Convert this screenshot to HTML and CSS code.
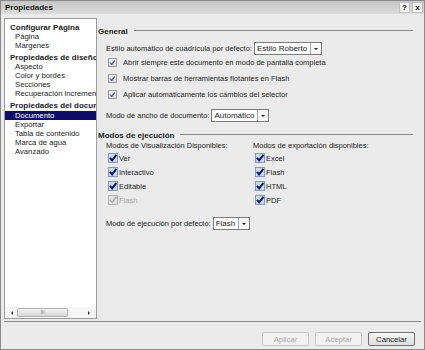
FILE: index.html
```html
<!DOCTYPE html>
<html lang="es">
<head>
    <meta charset="UTF-8">
    <meta name="viewport" content="width=device-width, initial-scale=1.0">
    <title>Propiedades</title>
    <link rel="stylesheet" href="styles.css">
</head>
<body>
    <div class="dialog">
        <div class="titlebar">
            <span class="title">Propiedades</span>
            <div class="title-btns">
                <span class="tbtn">?</span>
                <span class="tbtn">x</span>
            </div>
        </div>

        <div class="main">
            <div class="nav">
                <div class="nav-list">
                    <div class="nav-head first">Configurar Página</div>
                    <div class="nav-item">Página</div>
                    <div class="nav-item">Márgenes</div>
                    <div class="nav-head">Propiedades de diseño</div>
                    <div class="nav-item">Aspecto</div>
                    <div class="nav-item">Color y bordes</div>
                    <div class="nav-item">Secciones</div>
                    <div class="nav-item">Recuperación incremental</div>
                    <div class="nav-head">Propiedades del documento</div>
                    <div class="nav-item selected">Documento</div>
                    <div class="nav-item">Exportar</div>
                    <div class="nav-item">Tabla de contenido</div>
                    <div class="nav-item">Marca de agua</div>
                    <div class="nav-item">Avanzado</div>
                </div>
                <div class="hscroll">
                    <span class="arrow left"></span>
                    <span class="thumb">III</span>
                    <span class="arrow right"></span>
                </div>
            </div>

            <div class="content">
                <div class="legend"><span>General</span><i></i></div>

                <div class="field-row first-field">
                    Estilo automático de cuadrícula por defecto:
                    <span class="select"><span class="sel-val">Estilo Roberto</span><span class="sel-btn"></span></span>
                </div>
                <div class="cb-row">
                    <span class="chk"><svg viewBox="0 0 9 9" width="9" height="9"><path d="M2.2 4.6 L3.8 6.4 L6.8 2.6" fill="none" stroke="#3d5f9c" stroke-width="1.3"/></svg></span>
                    Abrir siempre este documento en modo de pantalla completa
                </div>
                <div class="cb-row">
                    <span class="chk"><svg viewBox="0 0 9 9" width="9" height="9"><path d="M2.2 4.6 L3.8 6.4 L6.8 2.6" fill="none" stroke="#3d5f9c" stroke-width="1.3"/></svg></span>
                    Mostrar barras de herramientas flotantes en Flash
                </div>
                <div class="cb-row">
                    <span class="chk"><svg viewBox="0 0 9 9" width="9" height="9"><path d="M2.2 4.6 L3.8 6.4 L6.8 2.6" fill="none" stroke="#3d5f9c" stroke-width="1.3"/></svg></span>
                    Aplicar automáticamente los cambios del selector
                </div>
                <div class="field-row width-field">
                    Modo de ancho de documento:
                    <span class="select"><span class="sel-val">Automático</span><span class="sel-btn"></span></span>
                </div>

                <div class="legend modes"><span>Modos de ejecución</span><i></i></div>

                <div class="columns">
                    <div class="col">
                        <div class="col-title">Modos de Visualización Disponibles:</div>
                        <div class="mode"><span class="box"><svg viewBox="0 0 10 10" width="10" height="10"><path d="M2 4.8 L4.1 7.4 L8.4 1.8" fill="none" stroke="#0d1466" stroke-width="2"/></svg></span>Ver</div>
                        <div class="mode"><span class="box"><svg viewBox="0 0 10 10" width="10" height="10"><path d="M2 4.8 L4.1 7.4 L8.4 1.8" fill="none" stroke="#0d1466" stroke-width="2"/></svg></span>Interactivo</div>
                        <div class="mode"><span class="box"><svg viewBox="0 0 10 10" width="10" height="10"><path d="M2 4.8 L4.1 7.4 L8.4 1.8" fill="none" stroke="#0d1466" stroke-width="2"/></svg></span>Editable</div>
                        <div class="mode disabled"><span class="box"><svg viewBox="0 0 10 10" width="10" height="10"><path d="M2 4.8 L4.1 7.4 L8.4 1.8" fill="none" stroke="#a8a8a8" stroke-width="1.4"/></svg></span>Flash</div>
                    </div>
                    <div class="col">
                        <div class="col-title">Modos de exportación disponibles:</div>
                        <div class="mode"><span class="box"><svg viewBox="0 0 10 10" width="10" height="10"><path d="M2 4.8 L4.1 7.4 L8.4 1.8" fill="none" stroke="#0d1466" stroke-width="2"/></svg></span>Excel</div>
                        <div class="mode"><span class="box"><svg viewBox="0 0 10 10" width="10" height="10"><path d="M2 4.8 L4.1 7.4 L8.4 1.8" fill="none" stroke="#0d1466" stroke-width="2"/></svg></span>Flash</div>
                        <div class="mode"><span class="box"><svg viewBox="0 0 10 10" width="10" height="10"><path d="M2 4.8 L4.1 7.4 L8.4 1.8" fill="none" stroke="#0d1466" stroke-width="2"/></svg></span>HTML</div>
                        <div class="mode"><span class="box"><svg viewBox="0 0 10 10" width="10" height="10"><path d="M2 4.8 L4.1 7.4 L8.4 1.8" fill="none" stroke="#0d1466" stroke-width="2"/></svg></span>PDF</div>
                    </div>
                </div>

                <div class="field-row run-field">
                    Modo de ejecución por defecto:
                    <span class="select"><span class="sel-val">Flash</span><span class="sel-btn"></span></span>
                </div>
            </div>
        </div>

        <div class="footer">
            <button class="btn" disabled>Aplicar</button>
            <button class="btn" disabled>Aceptar</button>
            <button class="btn">Cancelar</button>
        </div>
    </div>
</body>
</html>
```

FILE: styles.css
```css
body {
    margin: 0;
    font-family: "Liberation Sans", Arial, sans-serif;
    font-size: 7.5px;
    color: #1c1c1c;
    background: #ffffff;
}
.dialog {
    width: 425px;
    height: 350px;
    box-sizing: border-box;
    border: 1px solid #8a8a8a;
    background: #ebebeb;
    display: flex;
    flex-direction: column;
}
.titlebar {
    height: 13px;
    display: flex;
    align-items: center;
    justify-content: space-between;
    padding: 0 1px 0 4px;
    background: linear-gradient(#c6c6c6, #dcdcdc);
}
.title {
    font-weight: bold;
    font-size: 8px;
}
.title-btns {
    display: flex;
    gap: 2px;
}
.tbtn {
    width: 9px;
    height: 9px;
    line-height: 9px;
    text-align: center;
    font-weight: bold;
    font-size: 8px;
    background: #f2f2f2;
    border: 1px solid #c2c2c2;
}
.main {
    flex: 1;
    display: flex;
    padding: 4px 3px 2px 3px;
    min-height: 0;
}
.nav {
    width: 93px;
    box-sizing: border-box;
    border: 1px solid #9c9c9c;
    background: #fff;
    display: flex;
    flex-direction: column;
}
.nav-list {
    flex: 1;
    overflow: hidden;
    padding-top: 4px;
}
.nav-head,
.nav-item {
    white-space: nowrap;
    line-height: 9px;
}
.nav-head {
    font-weight: bold;
    font-size: 8px;
    padding-left: 5px;
    margin-top: 3px;
}
.nav-head.first {
    margin-top: 0;
}
.nav-item {
    padding-left: 10px;
    font-size: 7.7px;
}
.nav-item.selected {
    background: #0c0c6c;
    color: #fff;
    margin-top: 1px;
}
.hscroll {
    height: 11px;
    display: flex;
    align-items: center;
    background: #f6f6f6;
    padding: 0 2px;
}
.arrow {
    width: 0;
    height: 0;
    border-top: 2px solid transparent;
    border-bottom: 2px solid transparent;
}
.arrow.left {
    border-right: 2px solid #333;
    margin: 0 4px 0 4px;
}
.arrow.right {
    border-left: 2px solid #333;
    margin: 0 4px 0 auto;
}
.thumb {
    width: 51px;
    height: 9px;
    box-sizing: border-box;
    border: 1px solid #b4b4b4;
    border-radius: 2px;
    background: linear-gradient(#f4f4f4, #d6d6d6);
    font-size: 5px;
    line-height: 7px;
    text-align: center;
    color: #777;
}
.content {
    flex: 1;
    padding: 8px 8px 0 1px;
}
.legend {
    display: flex;
    align-items: center;
    height: 10px;
    font-weight: bold;
    font-size: 8px;
}
.legend i {
    flex: 1;
    height: 1px;
    background: #8c8c8c;
    margin: 0 0 2px 6px;
}
.legend.modes {
    margin-top: 8px;
}
.field-row {
    display: flex;
    align-items: center;
    gap: 2px;
    padding-left: 8px;
    height: 14px;
    white-space: nowrap;
}
.first-field {
    margin-top: 5px;
    margin-bottom: -1px;
}
.width-field {
    margin-top: 6px;
}
.run-field {
    margin-top: 9px;
}
.select {
    display: flex;
    height: 13px;
    box-sizing: border-box;
    border: 1px solid #7c7c7c;
    background: #fff;
}
.sel-val {
    padding: 0 3px 0 2px;
    line-height: 11px;
    font-size: 8px;
}
.sel-btn {
    width: 10px;
    border-left: 1px solid #a8a8a8;
    background: #f7f7f7;
    position: relative;
}
.sel-btn::after {
    content: "";
    position: absolute;
    left: 3px;
    top: 5px;
    border-left: 2px solid transparent;
    border-right: 2px solid transparent;
    border-top: 2px solid #222;
}
.cb-row {
    display: flex;
    align-items: center;
    height: 16px;
    padding-left: 10px;
    gap: 6px;
    white-space: nowrap;
}
.chk {
    width: 9px;
    height: 9px;
    box-sizing: border-box;
    border: 1px solid #9a9a9a;
    background: linear-gradient(#f6f6f6, #d9d9d9);
    display: flex;
    align-items: center;
    justify-content: center;
}
.chk svg {
    flex: none;
}
.columns {
    display: flex;
    margin-top: 1px;
}
.col {
    width: 147px;
    padding-left: 8px;
}
.col + .col {
    padding-left: 0;
}
.col-title {
    height: 10px;
    line-height: 10px;
    white-space: nowrap;
}
.mode {
    display: flex;
    align-items: center;
    height: 14px;
    padding-left: 2px;
}
.box {
    width: 10px;
    height: 10px;
    box-sizing: border-box;
    border: 1px solid #7f9dc4;
    background: #c9dcf0;
    display: flex;
    align-items: center;
    justify-content: center;
    margin-right: 1px;
}
.box svg {
    flex: none;
}
.mode.disabled {
    color: #a6a6a6;
}
.mode.disabled .box {
    border-color: #b4b4b4;
    background: #e2e2e2;
}
.footer {
    height: 28px;
    margin: 0 3px;
    border-top: 1px solid #8c8c8c;
    display: flex;
    justify-content: flex-end;
    align-items: flex-start;
    gap: 6px;
    padding: 10px 6px 0 0;
    box-sizing: border-box;
}
.btn {
    width: 47px;
    height: 14px;
    font-family: inherit;
    font-size: 7.7px;
    padding: 0;
    border: 1px solid #707070;
    border-radius: 2px;
    background: linear-gradient(#f7f7f7, #dedede);
    color: #1c1c1c;
}
.btn:disabled {
    border-color: #c4c4c4;
    background: #f2f2f2;
    color: #a8a8a8;
}
```
